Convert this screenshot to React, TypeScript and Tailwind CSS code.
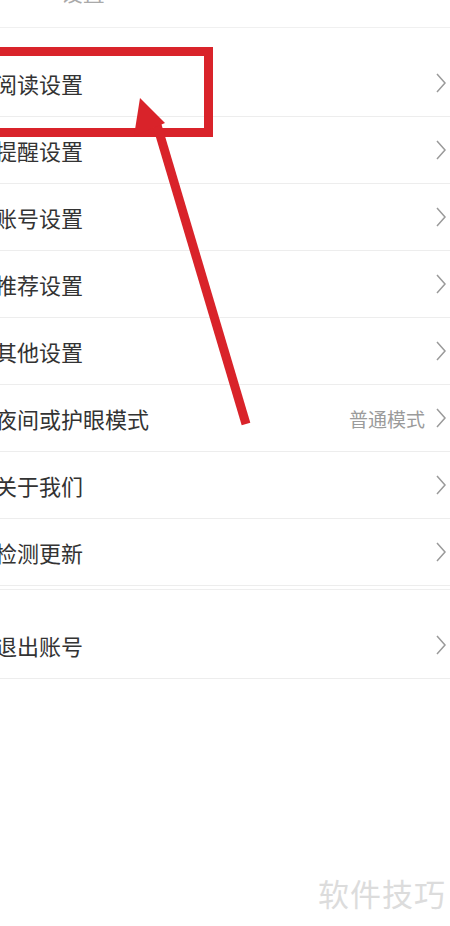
import React from 'react'

const rows = [
  { label: '阅读设置' },
  { label: '提醒设置' },
  { label: '账号设置' },
  { label: '推荐设置' },
  { label: '其他设置' },
  { label: '夜间或护眼模式', value: '普通模式' },
  { label: '关于我们' },
  { label: '检测更新' },
]

const Chevron = () => (
  <svg width="12" height="22" viewBox="0 0 12 22" className="shrink-0">
    <polyline points="2,2 10,11 2,20" fill="none" stroke="#9a9a9a" strokeWidth="1.5" strokeLinejoin="miter" />
  </svg>
)

const Row = ({ label, value }: { label: string; value?: string }) => (
  <div className="flex h-[67px] items-center justify-between border-b border-[#ededed] pl-0 pr-[3px]">
    <span className="ml-[-5px] text-[22px] leading-none text-[#333]">{label}</span>
    <div className="flex items-center gap-[10px]">
      {value && <span className="text-[19px] leading-none text-[#9b9b9b]">{value}</span>}
      <Chevron />
    </div>
  </div>
)

export default function App() {
  return (
    <div
      className="relative h-[926px] w-[450px] overflow-hidden bg-white"
      style={{ fontFamily: '"Noto Sans CJK SC", "Noto Sans", sans-serif' }}
    >
      <div className="h-[28px] overflow-hidden border-b border-[#f0f0f0]">
        <div className="mt-[-25px] flex items-center gap-[48px] pl-[6px] text-[22px] text-[#aaa]">
          <span>‹</span>
          <span>设置</span>
        </div>
      </div>
      <div className="h-[22px]" />
      <div className="border-b border-[#eeeeee] pb-[3px]">
        {rows.map((r) => (
          <Row key={r.label} label={r.label} value={r.value} />
        ))}
      </div>
      <div className="h-[22px]" />
      <Row label="退出账号" />

      <div className="absolute bottom-[10px] right-[4px] text-[31px] tracking-[1px] text-[#dcdcdc]">软件技巧</div>

      {/* red annotation */}
      <div className="absolute left-[-20px] top-[47px] h-[90px] w-[233px] border-[9px] border-[#d9232a]" />
      <svg className="absolute left-0 top-0" width="450" height="926" viewBox="0 0 450 926">
        <line x1="157" y1="125" x2="246" y2="424" stroke="#d9232a" strokeWidth="9" />
        <polygon points="140,98 165,123 134,136" fill="#d9232a" />
      </svg>
    </div>
  )
}
